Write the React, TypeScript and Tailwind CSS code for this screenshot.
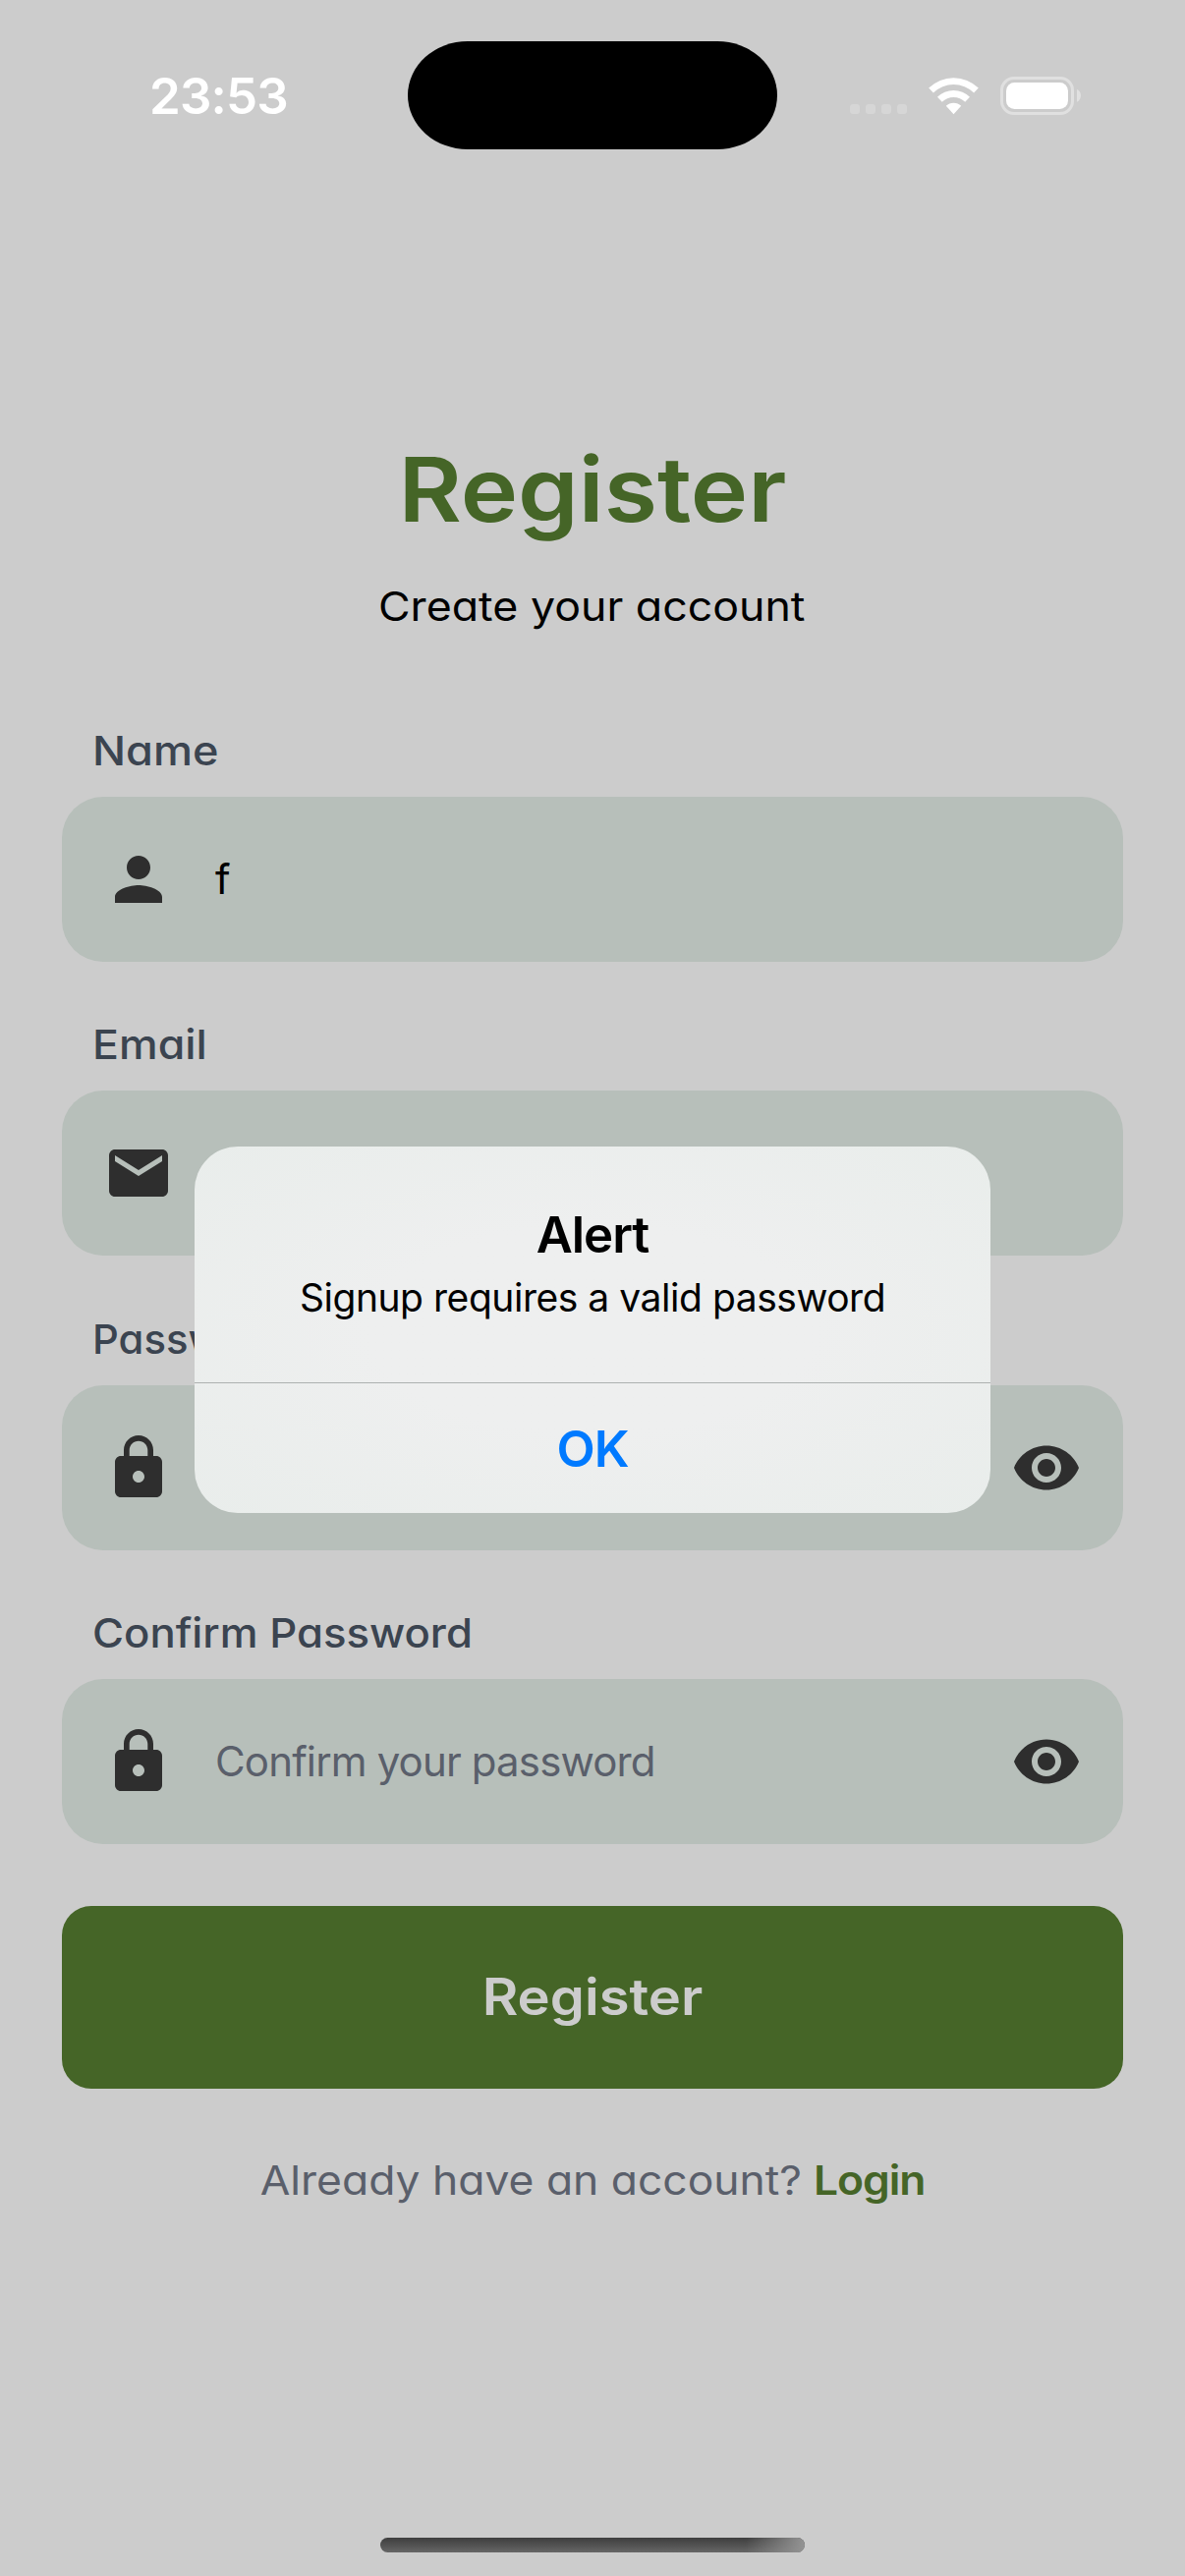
import type { ReactNode } from "react";
import { MdEmail, MdLock, MdPerson, MdVisibility } from "react-icons/md";

// Single-storey "a" gives Inter a geometric look for the branded text.
const geo = "[font-feature-settings:'cv11']";

function StatusBar() {
  return (
    <header className="relative flex h-[186px] w-full justify-between">
      <div className="ml-[152px] mt-[66px] h-16 whitespace-nowrap text-[51px] font-semibold leading-[64px] tracking-[-0.8px] text-white">
        23:53
      </div>
      <div className="absolute left-[415px] top-[41.5px] h-[110.5px] w-[376px] rounded-[61px/55px] bg-black" />
      <svg className="mr-[104px] mt-[76px] h-[44px] w-[238px]" viewBox="864 76 238 44" fill="none">
        <g fill="#d6d6d6">
          <rect x="865" y="106" width="10" height="10" rx="3" />
          <rect x="881" y="106" width="10" height="10" rx="3" />
          <rect x="897" y="106" width="10" height="10" rx="3" />
          <rect x="913" y="106" width="10" height="10" rx="3" />
        </g>
        <g fill="#fff">
          <path d="M945.2 89.600a36 36 0 0 1 50.600 0l-4.700 4.800a29.500 29.500 0 0 0-41.200 0z" />
          <path d="M954 98.700a23.400 23.400 0 0 1 33 0l-4.800 5a17 17 0 0 0-23.400 0z" />
          <path d="M962.8 107.800a11 11 0 0 1 15.400 0l-7.700 8.400z" />
          <rect x="1024" y="84" width="63" height="27" rx="8.5" />
        </g>
        <rect x="1019.5" y="79.5" width="72" height="36" rx="12.5" stroke="#e0e0e0" strokeWidth="3" />
        <path d="M1096 91c5.300 2 5.300 10.500 0 12.800z" fill="#e0e0e0" />
      </svg>
    </header>
  );
}

type FieldProps = { label: ReactNode; icon: ReactNode; value?: string; placeholder?: string; secure?: boolean };

function Field({ label, icon, value, placeholder, secure }: FieldProps) {
  return (
    <div className="flex h-[299.4px] flex-col">
      <div className={`${geo} h-[78px] pl-[30.5px] text-[41px] font-medium leading-[62px] text-[#3b4450]`}>{label}</div>
      <div className="flex h-[168px] items-center rounded-[42px] bg-[#b7bfba] px-[42px] text-[72px] text-[#2e2e2e]">
        {icon}
        <div className="ml-[42px] flex-1 text-[42px] leading-[52px] tracking-[-0.85px]">
          {value ? <span className="text-black">{value}</span> : <span className="text-[#5a5f6b]">{placeholder}</span>}
        </div>
        {secure && <MdVisibility />}
      </div>
    </div>
  );
}

export default function App() {
  return (
    <main className="relative flex h-[2622px] w-[1206px] flex-col overflow-hidden bg-[#cccccc] font-['Inter',sans-serif]">
      <StatusBar />
      <section className={`${geo} mt-[254px] flex flex-col items-center`}>
        <h1 className="h-[120px] scale-x-[1.085] text-[91px] font-semibold leading-[116px] text-[#456527]">Register</h1>
        <p className="mt-[25px] h-[65px] scale-x-[1.09] pr-[2px] text-[41px] leading-[64px] text-black">Create your account</p>
      </section>
      <section className="mt-[83px] flex flex-col px-[63px]">
        <Field label={<span className="inline-block origin-left scale-x-[1.1]">Name</span>} icon={<MdPerson />} value="f" />
        <Field label={<span className="inline-block origin-left scale-x-[1.09]">Email</span>} icon={<MdEmail />} />
        <Field label={<span className="inline-block origin-left scale-x-[1.02]">Password</span>} icon={<MdLock />} secure />
        <Field
          label={<span className="inline-block origin-left scale-x-[1.065]">Confirm Password</span>}
          icon={<MdLock />}
          placeholder="Confirm your password"
          secure
        />
        <button className={`${geo} mt-[9.4px] h-[186px] rounded-[30px] bg-[#456527] text-[52px] font-semibold text-[#cccccc]`}>
          <span className="inline-block scale-x-[1.08]">Register</span>
        </button>
        <p className={`${geo} mt-[61px] flex scale-x-[1.083] justify-center gap-[11px] text-[41px] leading-[64px] text-[#5a5f6b]`}>
          <span>Already have an account?</span>
          <span className="font-semibold tracking-[-1px] text-[#456527]">Login</span>
        </p>
      </section>
      <div className="absolute left-[198px] top-[1167px] flex h-[373px] w-[810px] flex-col rounded-[44px] bg-radial from-[#eeefef] from-40% to-[#e9edeb] text-center text-black">
        <h2 className="mt-[58px] h-16 text-[51px] font-semibold leading-[64px] tracking-[-1.1px]">Alert</h2>
        <p className="mt-[4px] h-[114px] text-[39px] leading-[56px] tracking-[-0.46px]">Signup requires a valid password</p>
        <button className="h-[133px] border-t border-[#adb1b0] pt-[2px] text-[51px] font-semibold tracking-[-1px] text-[#007aff]">OK</button>
      </div>
      <div className="absolute bottom-[24px] left-[387px] h-[15px] w-[432px] overflow-hidden rounded-full bg-linear-to-b from-[#3e3e3e] to-[#666666]">
        <div className="ml-auto h-full w-[60px] bg-linear-to-r from-transparent to-[#949494]" />
      </div>
    </main>
  );
}
